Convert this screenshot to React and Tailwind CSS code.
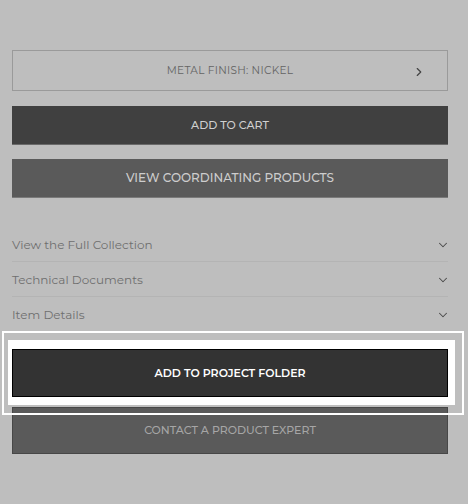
import { ChevronRight, ChevronDown } from 'lucide-react';

const font = { fontFamily: 'Montserrat, Inter, "Noto Sans", sans-serif' };

const rows = ['View the Full Collection', 'Technical Documents', 'Item Details'];

export default function App() {
  return (
    <div className="relative min-h-[504px] w-[468px] bg-[#bebebe] pt-[50px]" style={font}>
      <div className="ml-3 w-[436px]">
        {/* Finish selector */}
        <div className="relative flex h-[41px] items-center justify-center border border-[#9a9a9a] text-[10.5px] tracking-[0.3px] text-[#636363]">
          METAL FINISH: NICKEL
          <ChevronRight className="absolute right-[21px] top-[14px] h-[14px] w-[14px] text-[#444]" strokeWidth={2} />
        </div>

        <button className="mt-[15px] flex h-[39px] w-full items-center justify-center border-b border-[#6a6a6a] bg-[#404040] text-[11px] font-medium text-[#d0d0d0]">
          ADD TO CART
        </button>
        <button className="mt-[14px] flex h-[39px] w-full items-center justify-center border-b border-[#7a7a7a] bg-[#5a5a5a] text-[12px] font-medium text-[#cdcdcd]">
          VIEW COORDINATING PRODUCTS
        </button>

        {/* Accordion */}
        <div className="mt-[29px]">
          {rows.map((r) => (
            <div
              key={r}
              className="flex h-[35px] items-center justify-between border-b border-[#b4b4b4] pt-[2px] text-[12px] text-[#6f6f6f]"
            >
              <span>{r}</span>
              <ChevronDown className="mr-[-2px] h-[14px] w-[14px] text-[#4a4a4a]" strokeWidth={1.8} />
            </div>
          ))}
        </div>

        {/* Highlighted step */}
        <div className="relative mt-[17px]">
          <div className="pointer-events-none absolute -left-[10px] -right-[16px] -top-[18px] h-[84px] border-2 border-white" />
          <div className="absolute -left-[4px] -right-[7px] -top-[9px] h-[65px] bg-white" />
          <button className="relative flex h-[48px] w-full items-center justify-center border border-black bg-[#333] text-[11px] font-semibold text-white">
            ADD TO PROJECT FOLDER
          </button>
        </div>

        <button className="mt-[10px] flex h-[47px] w-full items-center justify-center border border-[#474747] bg-[#5a5a5a] text-[11px] font-medium text-[#a6a6a6]">
          CONTACT A PRODUCT EXPERT
        </button>
      </div>
    </div>
  );
}
